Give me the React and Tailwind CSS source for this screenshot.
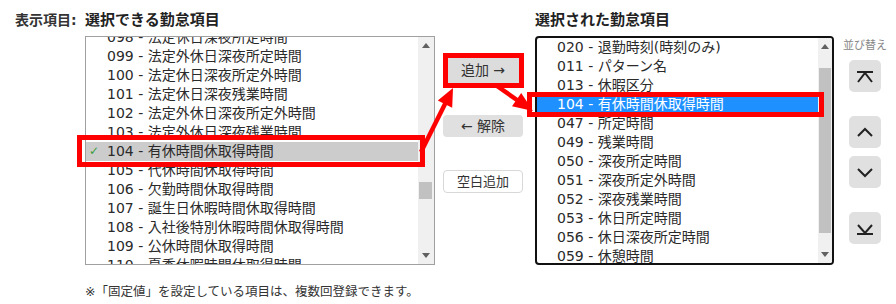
import React from "react";

const leftItems = [
  ["098", "法定休日深夜所定時間"],
  ["099", "法定外休日深夜所定時間"],
  ["100", "法定休日深夜所定外時間"],
  ["101", "法定休日深夜残業時間"],
  ["102", "法定外休日深夜所定外時間"],
  ["103", "法定外休日深夜残業時間"],
  ["104", "有休時間休取得時間", true],
  ["105", "代休時間休取得時間"],
  ["106", "欠勤時間休取得時間"],
  ["107", "誕生日休暇時間休取得時間"],
  ["108", "入社後特別休暇時間休取得時間"],
  ["109", "公休時間休取得時間"],
  ["110", "夏季休暇時間休取得時間"],
];

const rightItems = [
  ["020", "退勤時刻(時刻のみ)"],
  ["011", "パターン名"],
  ["013", "休暇区分"],
  ["104", "有休時間休取得時間", true],
  ["047", "所定時間"],
  ["049", "残業時間"],
  ["050", "深夜所定時間"],
  ["051", "深夜所定外時間"],
  ["052", "深夜残業時間"],
  ["053", "休日所定時間"],
  ["056", "休日深夜所定時間"],
  ["059", "休憩時間"],
];

function UpTri() {
  return (
    <svg width="8" height="5" viewBox="0 0 8 5">
      <polygon points="0,5 8,5 4,0" fill="#606060" />
    </svg>
  );
}
function DownTri() {
  return (
    <svg width="8" height="5" viewBox="0 0 8 5">
      <polygon points="0,0 8,0 4,5" fill="#606060" />
    </svg>
  );
}

function SortBtn({ children, className = "" }) {
  return (
    <div className={"ml-[6px] w-[32px] h-[32px] rounded-[5px] bg-[#e0e0e0] " + className}>
      <svg width="32" height="32" viewBox="0 0 32 32" fill="none" stroke="#222" strokeWidth="2">
        {children}
      </svg>
    </div>
  );
}

export default function App() {
  return (
    <div className="relative w-[896px] h-[304px] overflow-hidden bg-white text-[#333] font-['DejaVu_Sans','Noto_Sans_CJK_JP',sans-serif]">
      <div className="flex items-start">
        {/* label */}
        <div className="w-[85px] pl-[15px] pt-[10px] leading-[20px] text-[14px] font-bold text-[#333] whitespace-nowrap">
          表示項目:
        </div>

        {/* left list */}
        <div className="w-[350px]">
          <div className="h-[36px] pt-[10px] leading-[20px] text-[15px] font-bold text-[#222] whitespace-nowrap">
            選択できる勤怠項目
          </div>
          <div className="w-[350px] h-[229px] border border-[#a0a0a0] flex">
            <div className="flex-1 overflow-hidden">
              <div className="-mt-[9px]">
                {leftItems.map(([n, t, sel]) => (
                  <div
                    key={n}
                    className={
                      "flex items-center h-[19px] leading-[19px] text-[14px] whitespace-nowrap text-[#2a2a2a] " +
                      (sel ? "bg-[#cccccc]" : "")
                    }
                  >
                    <div className="w-[21px] pl-[3px] text-[12px] text-[#3a9d3a]">{sel ? "✓" : ""}</div>
                    <span>{n} - {t}</span>
                  </div>
                ))}
              </div>
            </div>
            <div className="w-[16px] bg-[#f0f0f0] flex flex-col">
              <div className="h-[17px] flex items-center justify-center"><UpTri /></div>
              <div className="flex-1">
                <div className="mt-[128px] ml-[1px] w-[13px] h-[17px] bg-[#c1c1c1]" />
              </div>
              <div className="h-[17px] flex items-center justify-center"><DownTri /></div>
            </div>
          </div>
        </div>

        {/* middle buttons */}
        <div className="w-[100px] pt-[36px] pl-[8px] flex flex-col text-[#333]">
          <div className="mt-[19px] w-[80px] h-[30px] bg-[#dcdcdc] rounded-[3px] flex items-center justify-center text-[14px] leading-[20px]">
            追加 →
          </div>
          <div className="mt-[30px] w-[80px] h-[22px] bg-[#e0e0e0] rounded-[4px] flex items-center justify-center text-[14px] leading-[20px]">
            ← 解除
          </div>
          <div className="mt-[33px] w-[80px] h-[23px] bg-white border border-[#d8d8d8] rounded-[4px] flex items-center justify-center text-[13px] leading-[20px]">
            空白追加
          </div>
        </div>

        {/* right list */}
        <div className="w-[299px]">
          <div className="h-[36px] pt-[10px] leading-[20px] text-[15px] font-bold text-[#222] whitespace-nowrap">
            選択された勤怠項目
          </div>
          <div className="w-[299px] h-[229px] border-2 border-[#111] rounded-[4px] flex overflow-hidden">
            <div className="flex-1 overflow-hidden">
              {rightItems.map(([n, t, sel]) => (
                <div
                  key={n}
                  className={
                    "h-[19px] leading-[19px] pl-[20px] text-[14px] whitespace-nowrap " +
                    (sel ? "bg-[#1e90ff] text-white" : "text-[#2a2a2a]")
                  }
                >
                  {n} - {t}
                </div>
              ))}
            </div>
            <div className="w-[14px] bg-[#f0f0f0] flex flex-col">
              <div className="h-[17px] flex items-center justify-center"><UpTri /></div>
              <div className="flex-1">
                <div className="mt-[13px] mx-[1px] h-[165px] bg-[#c1c1c1]" />
              </div>
              <div className="h-[17px] flex items-center justify-center"><DownTri /></div>
            </div>
          </div>
        </div>

        {/* sort column */}
        <div className="pl-[9px] pt-[38px] flex flex-col">
          <div className="h-[16px] leading-[16px] text-[11px] text-[#888] whitespace-nowrap">並び替え</div>
          <SortBtn className="mt-[6px]">
            <line x1="8" y1="12" x2="24" y2="12" />
            <polyline points="9,22 16,13 23,22" />
          </SortBtn>
          <SortBtn className="mt-[24px]">
            <polyline points="9,20 16,13 23,20" />
          </SortBtn>
          <SortBtn className="mt-[8px]">
            <polyline points="9,13 16,20 23,13" />
          </SortBtn>
          <SortBtn className="mt-[24px]">
            <polyline points="9,13 16,21 23,13" />
            <line x1="8" y1="22" x2="24" y2="22" />
          </SortBtn>
        </div>
      </div>

      {/* footer note */}
      <div className="mt-[18px] pl-[85px] leading-[18px] text-[12.5px] text-[#333] whitespace-nowrap">
        ※「固定値」を設定している項目は、複数回登録できます。
      </div>

      {/* red annotations */}
      <svg className="absolute left-0 top-0 pointer-events-none" width="896" height="304" viewBox="0 0 896 304">
        <g fill="none" stroke="#ff0000" strokeWidth="5">
          <rect x="79.5" y="137.5" width="343" height="27" />
          <rect x="445.5" y="55.5" width="76" height="30" />
          <rect x="529.5" y="94.5" width="292" height="20" />
        </g>
        <g stroke="#ff0000" strokeWidth="4.5">
          <line x1="421" y1="152" x2="445.5" y2="103" />
          <line x1="497" y1="86" x2="517" y2="100" />
        </g>
        <g fill="#ff0000">
          <polygon points="453,88 437.8,100.5 452.2,107.7" />
          <polygon points="533,111 512,106.2 521.2,93" />
        </g>
      </svg>
    </div>
  );
}
